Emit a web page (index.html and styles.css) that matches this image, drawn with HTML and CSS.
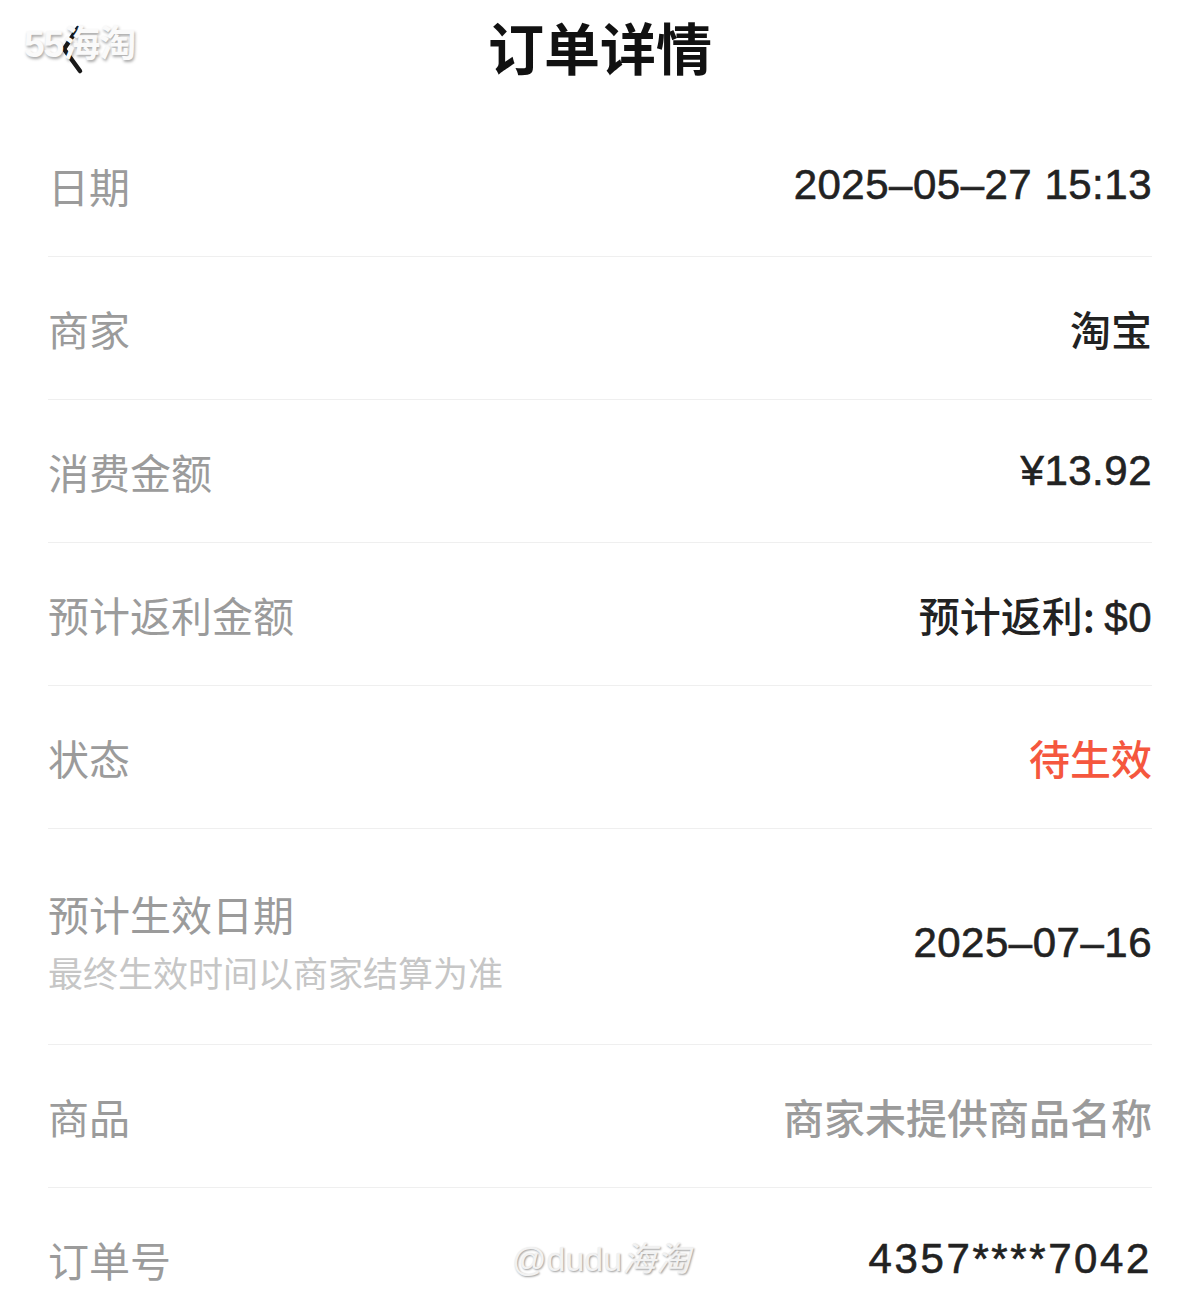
FILE: index.html
```html
<!DOCTYPE html>
<html>
<head>
<title>订单详情</title>
<link rel="stylesheet" href="styles.css">
</head>
<body>

<div class="page">
    <header class="nav">
        <a class="back" href="#">
            <svg width="30" height="52" viewBox="0 0 30 52">
                <polyline points="20,4 6,25 22,47" fill="none" stroke="#1a1a1a" stroke-width="4.5" stroke-linecap="round" stroke-linejoin="round"/>
            </svg>
        </a>
        <h1 class="title">订单详情</h1>
    </header>

    <ul class="detail-list">
        <li class="row">
            <span class="label">日期</span>
            <span class="value num">2025–05–27 15:13</span>
        </li>
        <li class="row">
            <span class="label">商家</span>
            <span class="value">淘宝</span>
        </li>
        <li class="row">
            <span class="label">消费金额</span>
            <span class="value num">¥13.92</span>
        </li>
        <li class="row">
            <span class="label">预计返利金额</span>
            <span class="value">预计返利: <span class="num">$0</span></span>
        </li>
        <li class="row">
            <span class="label">状态</span>
            <span class="value red">待生效</span>
        </li>
        <li class="row row-tall">
            <div class="label-group">
                <span class="label">预计生效日期</span>
                <span class="sub">最终生效时间以商家结算为准</span>
            </div>
            <span class="value num">2025–07–16</span>
        </li>
        <li class="row">
            <span class="label">商品</span>
            <span class="value muted">商家未提供商品名称</span>
        </li>
        <li class="row last">
            <span class="label">订单号</span>
            <span class="value num order">4357****7042</span>
        </li>
    </ul>

    <div class="wm wm-top">55海淘</div>
    <div class="wm wm-bottom">@dudu<i>海淘</i></div>
</div>

</body>
</html>
```

FILE: styles.css
```css
body {
    margin: 0;
    background: #fff;
    font-family: "Liberation Sans", "Noto Sans CJK SC", sans-serif;
}
.page {
    position: relative;
    padding: 0 48px;
    height: 1308px;
    overflow: hidden;
}
.nav {
    position: relative;
    height: 114px;
    display: flex;
    justify-content: center;
    align-items: flex-start;
}
.back {
    position: absolute;
    left: 10px;
    top: 24px;
    display: block;
}
.title {
    margin: 12px 0 0;
    font-family: "Noto Sans CJK SC", sans-serif;
    font-size: 56px;
    font-weight: 700;
    line-height: 68px;
    color: #111;
}
.detail-list {
    list-style: none;
    margin: 0;
    padding: 0;
}
.row {
    display: flex;
    justify-content: space-between;
    align-items: center;
    height: 142px;
    border-bottom: 1px solid #efefef;
}
.row-tall {
    height: auto;
    padding: 55px 0 42px;
}
.row.last {
    border-bottom: none;
}
.label-group {
    display: flex;
    flex-direction: column;
}
.label {
    font-family: "Noto Sans CJK SC", sans-serif;
    font-size: 41px;
    line-height: 58px;
    color: #9b9b9b;
    font-weight: 400;
}
.sub {
    font-family: "Noto Sans CJK SC", sans-serif;
    font-size: 35px;
    line-height: 60px;
    color: #c6c6c6;
}
.value {
    font-family: "Noto Sans CJK SC", sans-serif;
    font-size: 41px;
    font-weight: 500;
    color: #222;
}
.num {
    font-family: "Liberation Sans", sans-serif;
    font-size: 42px;
    font-weight: 400;
    letter-spacing: 0.5px;
    -webkit-text-stroke: 0.6px #222;
}
.order {
    letter-spacing: 2.6px;
}
.value.red {
    color: #f5573e;
}
.value.muted {
    color: #9b9b9b;
}
.wm {
    position: absolute;
    color: #fafafa;
    font-weight: 700;
    text-shadow: 1px 2px 3px rgba(0, 0, 0, 0.35);
    pointer-events: none;
}
.wm-top {
    left: 24px;
    top: 14px;
    font-size: 37px;
    letter-spacing: -1px;
}
.wm-bottom {
    left: 512px;
    top: 1232px;
    font-size: 34px;
    font-weight: 400;
    color: #f2f2f2;
    text-shadow: 1px 1px 2px rgba(0, 0, 0, 0.4);
}
.wm-bottom i {
    font-style: italic;
}
```
